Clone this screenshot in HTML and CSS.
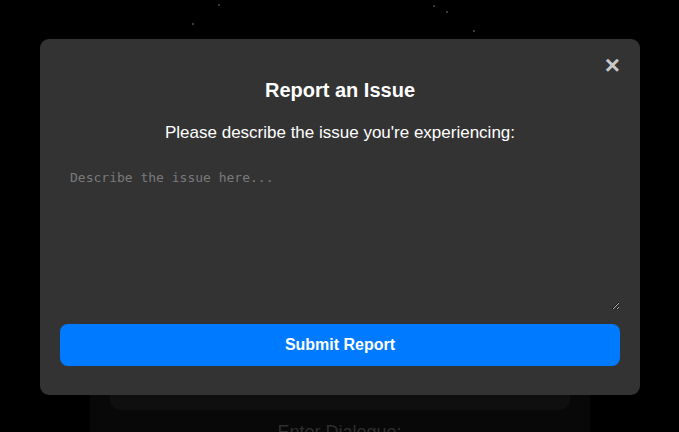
FILE: index.html
```html
<!DOCTYPE html>
<html>
<head>
<meta charset="utf-8">
<link rel="stylesheet" href="styles.css">
</head>
<body>
<div class="stars">
  <span class="star" style="left:218px;top:4px"></span>
  <span class="star" style="left:192px;top:23px"></span>
  <span class="star" style="left:433px;top:5px"></span>
  <span class="star" style="left:446px;top:11px"></span>
  <span class="star" style="left:473px;top:30px"></span>
</div>
<main class="app">
  <div class="app-panel">
    <div class="app-input"><span class="app-input-text">y</span></div>
    <div class="app-label">Enter Dialogue:</div>
  </div>
</main>
<div class="modal">
  <button class="close" type="button">&times;</button>
  <h2 class="title">Report an Issue</h2>
  <p class="subtitle">Please describe the issue you're experiencing:</p>
  <textarea class="issue" placeholder="Describe the issue here..."></textarea>
  <button class="submit" type="button">Submit Report</button>
</div>
</body>
</html>
```
FILE: styles.css
```css
html, body {
  margin: 0;
  padding: 0;
  width: 679px;
  height: 432px;
  overflow: hidden;
  background: #000;
  font-family: "Liberation Sans", Arial, sans-serif;
}
.stars {
  position: absolute;
  inset: 0;
}
.star {
  position: absolute;
  width: 2px;
  height: 2px;
  background: #3a3a3a;
}
.app {
  display: flex;
  justify-content: center;
  height: 432px;
  overflow: hidden;
}
.app-panel {
  width: 500px;
  margin-top: 300px;
  background: #080808;
  padding: 0 20px;
  box-sizing: border-box;
  display: flex;
  flex-direction: column;
  align-items: center;
  flex-shrink: 0;
}
.app-input {
  flex-shrink: 0;
  width: 460px;
  height: 110px;
  background: #0f0f0f;
  border-radius: 10px;
  box-sizing: border-box;
  padding: 76px 0 0 12px;
  color: #2a2a2a;
  font-size: 16px;
}
.app-label {
  flex-shrink: 0;
  margin-top: 12px;
  color: #2e2e2e;
  font-size: 18px;
  line-height: 21px;
}
.modal {
  position: absolute;
  left: 40px;
  top: 39px;
  width: 600px;
  height: 356px;
  box-sizing: border-box;
  padding: 20px;
  background: #333;
  border-radius: 9px;
  display: flex;
  flex-direction: column;
  align-items: stretch;
  color: #fff;
}
.close {
  position: absolute;
  top: 11px;
  right: 20px;
  background: none;
  border: 0;
  padding: 0;
  color: #c8c8c8;
  font-family: "Liberation Sans", Arial, sans-serif;
  font-size: 26px;
  font-weight: bold;
  line-height: 30px;
  cursor: pointer;
}
.title {
  margin: 20px 0 0;
  font-size: 20px;
  line-height: 23px;
  font-weight: bold;
  text-align: center;
}
.subtitle {
  margin: 21px 0 0;
  font-size: 17px;
  line-height: 19px;
  text-align: center;
}
.issue {
  display: block;
  margin-top: 18px;
  height: 150px;
  box-sizing: border-box;
  padding: 10px;
  background: #333;
  border: 0;
  outline: none;
  color: #fff;
  font-family: "DejaVu Sans Mono", monospace;
  font-size: 13px;
  resize: vertical;
}
.issue::placeholder {
  color: #7a7a7a;
}
.submit {
  margin-top: 14px;
  height: 42px;
  border: 0;
  border-radius: 8px;
  background: #007bff;
  color: #fff;
  font-family: "Liberation Sans", Arial, sans-serif;
  font-size: 16px;
  font-weight: bold;
  cursor: pointer;
}
```
